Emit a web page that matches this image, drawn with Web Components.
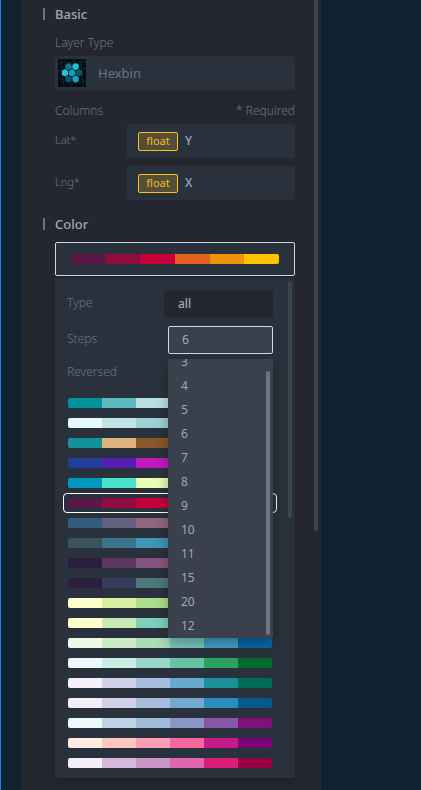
<!DOCTYPE html>
<html lang="en">
<head>
<meta charset="utf-8">
<title>Layer settings</title>
<style>
  html, body { margin: 0; height: 100%; }
  body { background: #10222f; font-family: "Noto Sans", "Open Sans", sans-serif; font-size: 12px; line-height: 16px; color: #6a7485; overflow: hidden; }
</style>
</head>
<body>
<map-shell>
  <settings-section heading="Basic">
    <layer-type label="Layer Type" value="Hexbin"></layer-type>
    <column-list>
      <column-field label="Lat*" type="float" value="Y"></column-field>
      <column-field label="Lng*" type="float" value="X"></column-field>
    </column-list>
  </settings-section>
  <settings-section heading="Color">
    <color-select></color-select>
  </settings-section>
</map-shell>
<script>
const define = (name, html, setup) => {
  const template = document.createElement('template');
  template.innerHTML = '<style>*{box-sizing:border-box}button,select{font:inherit;margin:0;cursor:pointer}</style>' + html;
  customElements.define(name, class extends HTMLElement {
    connectedCallback() {
      if (this.shadowRoot) return;
      const root = this.attachShadow({ mode: 'open' });
      root.append(template.content.cloneNode(true));
      root.querySelectorAll('[data-attr]').forEach(n => { n.textContent = this.getAttribute(n.dataset.attr) || ''; });
      if (setup) setup(this, root);
    }
  });
};

define('color-range', `
  <style>
    :host { display: flex; height: 10px; border-radius: 2px; overflow: hidden; }
    span { flex: 1; }
  </style>`, (host, root) => {
  host.getAttribute('colors').split(' ').forEach(c => {
    const s = document.createElement('span');
    s.style.background = '#' + c;
    root.append(s);
  });
});

define('map-shell', `
  <style>
    :host { display: grid; grid-template-columns: 20px minmax(0, 3fr) minmax(0, 1fr); min-height: 100%; border-left: 1px solid #1a83e0; }
    main { grid-column: 2; position: relative; background: #242730; padding: 4px 26px 12px 22px; }
    .scroll { position: absolute; right: 3px; top: 0; width: 4px; height: 531px; background: #3a4552; border-radius: 0 0 2px 2px; }
  </style>
  <main><slot></slot><div class="scroll"></div></main>`);

define('settings-section', `
  <style>
    :host { display: block; }
    :host(:not(:first-child)) { margin-top: 14px; }
    h2 { display: flex; align-items: center; gap: 10px; margin: 0 0 8px; font-size: 13px; font-weight: 500; line-height: 20px; color: #a0a7b4; }
    h2::before { content: ""; width: 2px; height: 12px; background: #6a7485; }
    .body { padding-left: 12px; }
  </style>
  <h2><span data-attr="heading"></span></h2>
  <div class="body"><slot></slot></div>`);

define('layer-type', `
  <style>
    :host { display: block; }
    label { display: block; height: 24px; padding-top: 3px; font-weight: 300; }
    button { display: flex; align-items: center; gap: 12px; width: 100%; height: 34px; padding: 0 3px; border: 0; border-radius: 2px; background: #29323c; color: #6a7485; font-size: 13px; }
    svg { width: 28px; height: 28px; }
  </style>
  <label for="type" data-attr="label"></label>
  <button id="type" type="button">
    <svg viewBox="0 0 28 28" aria-hidden="true">
      <rect width="28" height="28" fill="#060d19"/>
      <path d="M0 5l8-2 9 2 11-3M3 0l3 28M15 0l2 6M23 0l2 28M0 19l8 3 7 2 13-2M12 22l1 6M0 12l5-1M24 10l4-1" fill="none" stroke="#10292f" stroke-width="1"/>
      <g id="g"></g>
    </svg>
    <span data-attr="value"></span>
  </button>`, (host, root) => {
  const cells = [[10.5, 7.6, '#15748b'], [17.6, 7.6, '#21bfdd'], [7, 13.8, '#22c3e1'], [14, 13.8, '#1ba0ba'], [21, 13.8, '#10566a'], [10.5, 20, '#10566a'], [17.6, 20, '#1ba0ba']];
  root.getElementById('g').innerHTML = cells.map(([x, y, c]) =>
    `<path fill="${c}" d="M${x} ${y - 3.7}l3.2 1.85v3.7l-3.2 1.85l-3.2-1.85v-3.7z"/>`).join('');
});

define('column-list', `
  <style>
    :host { display: block; margin-top: 13px; }
    header { display: flex; justify-content: space-between; height: 21px; font-weight: 300; font-size: 12px; }
    .fields { display: grid; gap: 8px; }
  </style>
  <header><span>Columns</span><span>* Required</span></header>
  <div class="fields"><slot></slot></div>`);

define('column-field', `
  <style>
    :host { display: grid; grid-template-columns: 3fr 7fr; align-items: center; }
    label { padding-bottom: 2px; font-size: 11px; font-weight: 300; }
    button { display: flex; align-items: center; gap: 7px; height: 34px; padding: 0 11px; border: 0; border-radius: 2px; background: #29323c; color: #a0a7b4; font-weight: 500; }
    .tag { width: 40px; height: 19px; border: 1px solid #ffc21a; border-radius: 2px; background: #544e36; color: #f5bd1f; font-size: 11px; font-weight: 400; line-height: 16px; text-align: center; }
  </style>
  <label for="field" data-attr="label"></label>
  <button id="field" type="button"><span class="tag" data-attr="type"></span><span data-attr="value"></span></button>`);

define('steps-list', `
  <style>
    :host { display: block; background: #3a414c; box-shadow: 0 6px 12px rgba(0,0,0,.3); overflow: hidden; }
    ul { list-style: none; margin: -9px 0 0; padding: 0; font-size: 12px; color: #a0a7b4; }
    li { height: 24px; line-height: 24px; padding-left: 13px; }
    .scroll { position: absolute; right: 3px; top: 12px; bottom: 3px; width: 4px; border-radius: 2px; background: #6a7485; }
  </style>
  <ul role="listbox" aria-label="Steps"></ul><div class="scroll"></div>`, (host, root) => {
  root.querySelector('ul').innerHTML = [3, 4, 5, 6, 7, 8, 9, 10, 11, 15, 20, 12].map(n => `<li role="option">${n}</li>`).join('');
});

const RANGES = [
  '00939c 5dbabf bae1e2 f8c0aa dd7755 c22e00',
  'e6fafa c1e5e6 9dd0d4 75bbc1 4ba7af 00939c',
  '12939a ddb27c 88572c ff991f f15c17 223f9a',
  '213e9a 551eae c019bd d6295f f45441 f9e200',
  '0198bd 49e3ce e8feb5 feedb1 fead54 d50255',
  '5a1846 900c3f c70039 e3611c f1920e ffc300',
  '355c7d 63617f 916681 c06c84 d28389 f8b195',
  '3a545d 3b748a 4095b5 52aec9 96c7d5 d9e5e8',
  '2c1e3d 5b375f 85547d a7749a c698b1 e0c3cd',
  '2c1e3d 343d5e 4f777e 78aa87 b6c991 e6dca8',
  'ffffcc d9f0a3 addd8e 78c679 31a354 006837',
  'ffffcc c7e9b4 7fcdbb 41b6c4 2c7fb8 253494',
  'f0f9e8 ccebc5 a8ddb5 7bccc4 43a2ca 0868ac',
  'edf8fb ccece6 99d8c9 66c2a4 2ca25f 006d2c',
  'f6eff7 d0d1e6 a6bddb 67a9cf 1c9099 016c59',
  'f1eef6 d0d1e6 a6bddb 74a9cf 2b8cbe 045a8d',
  'edf8fb bfd3e6 9ebcda 8c96c6 8856a7 810f7c',
  'feebe2 fcc5c0 fa9fb5 f768a1 c51b8a 7a0177',
  'f1eef6 d4b9da c994c7 df65b0 dd1c77 980043'
];

define('palette-list', `
  <style>
    :host { display: grid; }
    button { display: block; padding: 4px; height: 20px; border: 1px solid transparent; border-radius: 4px; background: none; }
    button[aria-pressed=true] { border-color: #fff; }
  </style>`, (host, root) => {
  RANGES.forEach((colors, i) => {
    const b = document.createElement('button');
    b.type = 'button';
    b.setAttribute('aria-label', 'Palette ' + (i + 1));
    b.setAttribute('aria-pressed', String(i === 5));
    b.innerHTML = `<color-range colors="${colors}"></color-range>`;
    root.append(b);
  });
});

define('color-select', `
  <style>
    :host { display: block; }
    .current { display: block; width: 100%; height: 34px; padding: 0 15px; border: 1px solid #d3d8e0; border-radius: 2px; background: #29323c; }
    .menu { position: relative; margin-top: 2px; padding: 12px 18px 5px 8px; background: #29323c; border-radius: 2px; box-shadow: 0 6px 12px rgba(0,0,0,.16); }
    .menu-scroll { position: absolute; right: 3px; top: 3px; width: 4px; height: 237px; border-radius: 2px; background: #3a4552; }
    .row { display: flex; align-items: center; justify-content: space-between; height: 28px; margin: 0 4px 8px; font-weight: 300; }
    .row label { padding-bottom: 2px; }
    select { appearance: none; width: 109px; height: 28px; padding: 0 14px; border: 0; border-radius: 2px; background: #242730; color: #a0a7b4; font-size: 12px; font-weight: 500; }
    .steps { position: relative; width: 105px; font-weight: 400; }
    .steps button { display: block; width: 100%; height: 28px; padding: 0 13px; border: 1px solid #d3d8e0; border-radius: 2px; background: #3a414c; color: #a0a7b4; font-size: 12px; text-align: left; }
    steps-list { position: absolute; top: 33px; left: 0; right: 0; z-index: 1; }
    .reversed { height: 22px; margin-bottom: 9px; }
    input { margin: 0; }
  </style>
  <button class="current" type="button" aria-label="Color range"><color-range colors="5a1846 900c3f c70039 e3611c f1920e ffc300"></color-range></button>
  <div class="menu">
    <div class="row"><label for="type">Type</label><select id="type"><option>all</option></select></div>
    <div class="row"><label for="steps">Steps</label>
      <div class="steps"><button id="steps" type="button" aria-haspopup="listbox" aria-expanded="true">6</button><steps-list></steps-list></div>
    </div>
    <div class="row reversed"><label for="reversed">Reversed</label><input id="reversed" type="checkbox"></div>
    <palette-list></palette-list>
    <div class="menu-scroll"></div>
  </div>`);
</script>
</body>
</html>
